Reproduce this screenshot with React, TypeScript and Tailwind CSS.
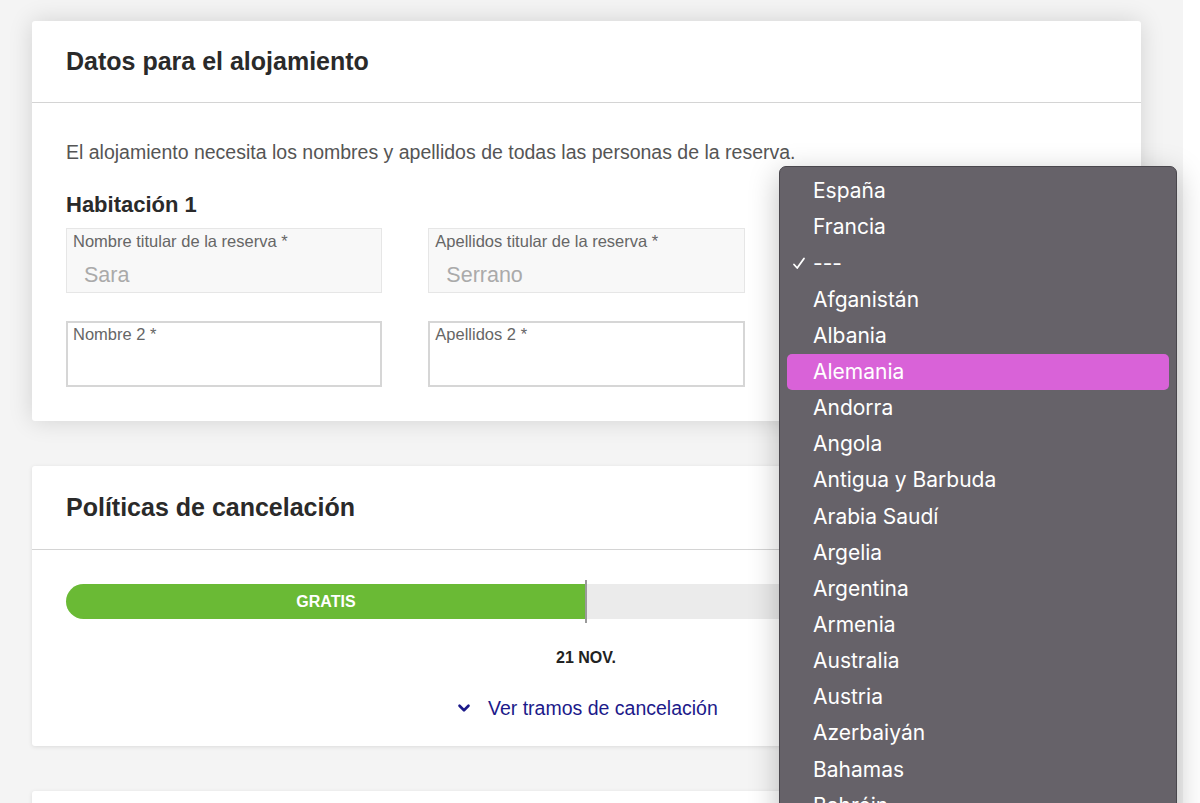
import { ChevronDown } from "lucide-react";

const countries = [
  "España",
  "Francia",
  "---",
  "Afganistán",
  "Albania",
  "Alemania",
  "Andorra",
  "Angola",
  "Antigua y Barbuda",
  "Arabia Saudí",
  "Argelia",
  "Argentina",
  "Armenia",
  "Australia",
  "Austria",
  "Azerbaiyán",
  "Bahamas",
  "Bahréin",
];

function Field({ label, value, disabled }: { label?: string; value?: string; disabled?: boolean }) {
  return (
    <div
      className={
        disabled
          ? "h-[65px] border border-[#e6e6e6] bg-[#f8f8f8] px-[6px] pt-[2px]"
          : "h-[66px] border-2 border-[#d6d6d6] bg-white px-[5px] pt-[1px]"
      }
    >
      {label && <div className="text-[16.5px] leading-[20px] text-[#666]">{label}</div>}
      {value && <div className="mt-[11px] pl-[11px] text-[21.5px] leading-[26px] text-[#aaa]">{value}</div>}
    </div>
  );
}

function Dropdown() {
  return (
    <div className="absolute left-[779px] top-[166px] h-[660px] w-[398px] rounded-[7px] border border-[#4a474d] bg-[#666269] px-[7px] pt-[6px] shadow-[0_8px_30px_rgba(0,0,0,0.25)] font-['Inter',sans-serif]">
      {countries.map((c) => (
        <div
          key={c}
          className={
            c === "Alemania"
              ? "relative flex h-[36.15px] items-center rounded-[5px] bg-[#d962d8] pl-[26px] text-[21px] text-white"
              : "relative flex h-[36.15px] items-center pl-[26px] text-[21px] text-white"
          }
        >
          {c === "---" && (
            <svg className="absolute left-[5px] top-[12px]" width="14" height="13" viewBox="0 0 14 13" fill="none">
              <path d="M2 7.5 L5.2 11 L12 1.5" stroke="white" strokeWidth="1.8" strokeLinecap="round" strokeLinejoin="round" />
            </svg>
          )}
          {c}
        </div>
      ))}
    </div>
  );
}

export default function App() {
  return (
    <div className="relative flex h-[803px] w-[1200px] overflow-hidden bg-white font-['Liberation_Sans',Arial,sans-serif]">
      <main className="flex w-[1183px] flex-col gap-[45px] bg-[#f4f4f4] pl-[32px] pr-[42px] pt-[21px]">
        <section className="rounded-[3px] bg-white shadow-[0_0_24px_rgba(0,0,0,0.14)]">
          <header className="flex h-[82px] items-center border-b border-[#d4d4d4] px-[34px]">
            <h2 className="text-[25px] font-bold text-[#2a2a2a]">Datos para el alojamiento</h2>
          </header>
          <div className="px-[34px] pb-[34px] pt-[37px]">
            <p className="text-[19.5px] leading-[24px] text-[#555]">
              El alojamiento necesita los nombres y apellidos de todas las personas de la reserva.
            </p>
            <h3 className="mt-[28px] text-[22px] font-bold leading-[26px] text-[#2a2a2a]">Habitación 1</h3>
            <div className="mt-[10px] grid grid-cols-3 gap-x-[46px] gap-y-[28px]">
              <Field label="Nombre titular de la reserva *" value="Sara" disabled />
              <Field label="Apellidos titular de la reserva *" value="Serrano" disabled />
              {/* country select sits under the open dropdown */}
              <Field disabled />
              <Field label="Nombre 2 *" />
              <Field label="Apellidos 2 *" />
              <div />
            </div>
          </div>
        </section>

        <section className="rounded-[3px] bg-white shadow-[0_1px_4px_rgba(0,0,0,0.1)]">
          <header className="flex h-[84px] items-center border-b border-[#d4d4d4] px-[34px]">
            <h2 className="text-[25px] font-bold text-[#2a2a2a]">Políticas de cancelación</h2>
          </header>
          <div className="px-[34px] pb-[25px] pt-[34px]">
            <div className="relative flex h-[35px]">
              <div className="flex w-[520px] items-center justify-center rounded-l-full bg-[#6aba35] text-[16px] font-bold text-white">
                GRATIS
              </div>
              <div className="flex-1 bg-[#ebebeb]" />
              <div className="absolute left-[519px] top-[-4px] h-[43px] w-[2px] bg-[#9a9a9a]" />
            </div>
            <div className="mt-[29px] pl-[490px] text-[16px] font-bold leading-[20px] text-[#222]">21 NOV.</div>
            <div className="mt-[27px] flex items-center gap-[15px] pl-[389px] text-[19.5px] leading-[26px] text-[#1c1a8a]">
              <ChevronDown size={18} strokeWidth={3.5} />
              <span>Ver tramos de cancelación</span>
            </div>
          </div>
        </section>

        <section className="h-[200px] shrink-0 rounded-[3px] bg-white shadow-[0_1px_4px_rgba(0,0,0,0.1)]" />
      </main>
      <div className="w-[17px] bg-white" />
      <Dropdown />
    </div>
  );
}
